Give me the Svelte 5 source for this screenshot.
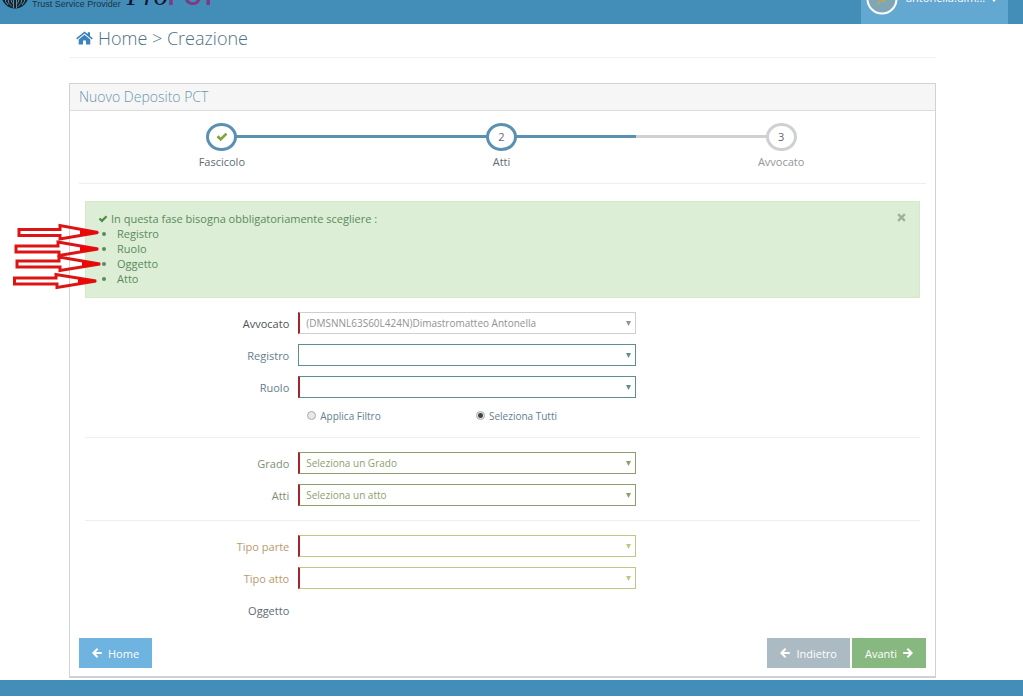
<script>
  const points = ['Registro', 'Ruolo', 'Oggetto', 'Atto'];
  const groups = [
    {
      rows: [
        { id: 'avvocato', label: 'Avvocato', value: '(DMSNNL63S60L424N)Dimastromatteo Antonella', tone: 'muted', required: true },
        { id: 'registro', label: 'Registro', value: '', tone: 'teal', required: false },
        { id: 'ruolo', label: 'Ruolo', value: '', tone: 'teal', required: true }
      ],
      filter: true
    },
    {
      rows: [
        { id: 'grado', label: 'Grado', value: 'Seleziona un Grado', tone: 'green', required: true },
        { id: 'atti', label: 'Atti', value: 'Seleziona un atto', tone: 'green', required: true }
      ]
    },
    {
      rows: [
        { id: 'tipo-parte', label: 'Tipo parte', value: '', tone: 'lime', required: true },
        { id: 'tipo-atto', label: 'Tipo atto', value: '', tone: 'lime', required: true }
      ],
      last: true
    }
  ];
  const progress = 74;
  let scope = $state('tutti');
  let alertOpen = $state(true);
</script>

{#snippet check(cls)}
  <svg class={cls} viewBox="0 0 12 10" aria-hidden="true"><path d="M0.6 5.2 2.5 3.3 4.7 5.4 9.5 0.7 11.4 2.6 4.7 9.3Z" /></svg>
{/snippet}

{#snippet arrow(flip)}
  <svg class="arrow" class:flip viewBox="0 0 10 10" aria-hidden="true">
    <path d="M9.8 5H1.6M5.6 0.8 1.4 5 5.6 9.2" fill="none" stroke="currentColor" stroke-width="2" />
  </svg>
{/snippet}

<header>
  <div class="brand">
    <svg class="globe" viewBox="0 0 28 28" aria-hidden="true">
      <circle cx="14" cy="14" r="13.5" fill="#10232f" />
      <g fill="none" stroke="#668ca3" stroke-width="1">
        <path d="M12.500 1V27M15.500 1V27M10 12v6q0 4 2.500 5M18 12v6q0 4-2.500 5M7 12v6q0 5 4 7.500M21 12v6q0 5-4 7.500M4 12v5q0 4 3 7M24 12v5q0 4-3 7" />
      </g>
    </svg>
    <span class="tagline">Trust Service Provider</span>
    <span class="product"><i>Pro</i><b>PCT</b></span>
  </div>
  <button class="user">
    <svg class="avatar" viewBox="0 0 32 32" aria-hidden="true">
      <circle cx="16" cy="16" r="14.5" fill="#7fa6b6" stroke="#fff" stroke-width="2" />
      <path d="M10 22 22 13M12 19l8-1" stroke="#b0a868" stroke-width="1.5" />
    </svg>
    <span>antonella.dim...</span>
    <svg class="down" viewBox="0 0 8 5" aria-hidden="true"><path d="M0 0h8L4 5Z" fill="#fff" /></svg>
  </button>
</header>

<main>
  <h1>
    <svg class="house" viewBox="0 0 17 14" aria-hidden="true">
      <path d="M8.5 0.4 0.2 7.3 1.2 8.5 8.5 2.5 15.8 8.5 16.8 7.3 14 5V1.2H11.8V3.1Z" />
      <path d="M8.5 3.7 2.7 8.5V13.6H7V9.5H10V13.6H14.3V8.5Z" />
    </svg>
    <span>Home &gt; Creazione</span>
  </h1>

  <section class="panel">
    <h2>Nuovo Deposito PCT</h2>
    <div class="body">
      <div class="wizard">
        <div class="track"><div class="done" style="width: {progress}%"></div></div>
        <ol>
          <li><span class="ring">{@render check('tick')}</span><span>Fascicolo</span></li>
          <li><span class="ring">2</span><span>Atti</span></li>
          <li class="todo"><span class="ring">3</span><span>Avvocato</span></li>
        </ol>
      </div>

      <div class="content">
        {#if alertOpen}
          <div class="alert">
            <div>
              <p>{@render check('mark')}<span>In questa fase bisogna obbligatoriamente scegliere :</span></p>
              <ul>
                {#each points as point}<li>{point}</li>{/each}
              </ul>
            </div>
            <button class="close" aria-label="Chiudi" onclick={() => (alertOpen = false)}>
              <svg viewBox="0 0 8 8" aria-hidden="true"><path d="M1 1 7 7M7 1 1 7" stroke="currentColor" stroke-width="2" /></svg>
            </button>
            <svg class="pointers" viewBox="0 0 92 70" aria-hidden="true">
              <g fill="none" stroke="#dc1414" stroke-width="3">
                <path d="M7 7.500H48V3.500L86 10.500 48 17V13.500H7Z" />
                <path d="M4 24H46V20L86 27 47 33.500V30H4Z" />
                <path d="M5 39H47V35L88 42 48 48.500V45H5Z" />
                <path d="M2.500 56H44V52.500L84 59 45 65.500V62H2.500Z" />
              </g>
              <path d="M68 7.500 88 10.500 68 13.500ZM68 24 88 27 68 30ZM70 39 90 42 70 45ZM66 56 86 59 66 62Z" fill="#f00505" />
            </svg>
          </div>
        {/if}

        <form>
          {#each groups as group}
            <div class="group">
              {#each group.rows as row}
                <div class="row {row.tone}">
                  <label for={row.id}>{row.label}</label>
                  <div class="field">
                    <select id={row.id} class:required={row.required} disabled={row.tone === 'muted'}>
                      <option>{row.value}</option>
                    </select>
                    <svg viewBox="0 0 5 5" aria-hidden="true"><path d="M0 0h5L2.500 5Z" fill="currentColor" /></svg>
                  </div>
                </div>
              {/each}
              {#if group.filter}
                <div class="row teal choice">
                  <div class="radios">
                    <label><input type="radio" name="scope" value="filtro" bind:group={scope} />Applica Filtro</label>
                    <label><input type="radio" name="scope" value="tutti" bind:group={scope} />Seleziona Tutti</label>
                  </div>
                </div>
              {/if}
              {#if group.last}
                <div class="row slate"><span class="name">Oggetto</span></div>
              {/if}
            </div>
          {/each}
        </form>
      </div>

      <div class="actions">
        <button class="btn home">{@render arrow(false)}Home</button>
        <button class="btn back">{@render arrow(false)}Indietro</button>
        <button class="btn next">Avanti{@render arrow(true)}</button>
      </div>
    </div>
  </section>
</main>
<footer></footer>

<style>
  :global(body) { margin: 0; background: #fff; }
  :global(#app) { font-family: 'Open Sans', sans-serif; font-size: 11px; color: #5f6b75; }
  * { box-sizing: border-box; }
  button, select, input { font: inherit; }
  svg { display: block; flex: none; }

  header { display: flex; justify-content: space-between; align-items: flex-end; height: 24px; padding-right: 15px; overflow: hidden; background: #438eb9; }
  .brand { display: flex; align-items: flex-end; padding-bottom: 14px; }
  .globe { width: 28px; height: 28px; margin: 0 3px 1px 1px; }
  .tagline { font: 9px/12px 'Liberation Sans', sans-serif; color: #1b3446; }
  .product { display: flex; align-items: baseline; margin-left: 6px; padding-bottom: 1px; line-height: 24px; color: #141432; }
  .product i { font: italic 28px/24px 'Liberation Serif', serif; }
  .product b { font: bold 24px/24px 'Liberation Sans', sans-serif; color: #7d3b82; }
  .user { display: flex; align-items: center; height: 45px; flex: none; width: 147px; padding: 0 10px 5px 5px; border: 0; background: #62a8d1; color: #fff; }
  .avatar { width: 32px; height: 32px; margin-right: 8px; }
  .user span { flex: 1; padding-bottom: 4px; text-align: left; white-space: nowrap; }
  .down { width: 8px; height: 5px; }

  main { padding: 0 87px 2px 69px; }
  h1 { display: flex; align-items: center; gap: 5px; height: 34px; margin: 0 0 25px; padding: 0 0 6px 7px; border-bottom: 1px solid #f0f2f4; font-size: 18px; font-weight: 300; color: #4e7186; }
  .house { width: 17px; height: 14px; fill: #3c83bd; }
  .panel { border: 1px solid #d0d2d3; border-bottom-width: 2px; }
  h2 { margin: 0; padding: 0 9px; border-bottom: 1px solid #dcdcdc; background: #f6f6f6; font-size: 14px; line-height: 26px; font-weight: 300; color: #6a96af; }
  .body { padding: 12px 9px 8px; }

  .wizard { display: grid; padding: 0 5px 13px 3px; border-bottom: 1px solid #eceeef; }
  .track, ol { grid-area: 1 / 1; }
  .track { height: 3px; margin: 12px 16.667% 0; background: #cfd0d1; }
  .done { height: 100%; background: #5a91b2; }
  ol { display: grid; grid-template-columns: repeat(3, 1fr); margin: 0; padding: 0; list-style: none; z-index: 1; }
  ol li { display: flex; flex-direction: column; align-items: center; gap: 3px; line-height: 16px; }
  .ring { display: flex; align-items: center; justify-content: center; width: 31px; height: 28px; border: 3px solid #5a91b2; border-radius: 50%; background: #fff; }
  .todo { color: #929699; }
  .todo .ring { border-color: #cfd0d1; color: #666; }
  .tick { width: 12px; height: 10px; fill: #7da636; }

  .content { padding: 17px 6px 0; }
  .alert { position: relative; display: flex; justify-content: space-between; align-items: flex-start; padding: 9px 13px 11px 12px; border: 1px solid #d5e9c8; background: #dceed6; color: #5b8a5c; line-height: 15px; }
  .alert p { display: flex; align-items: center; gap: 3px; margin: 0; }
  .mark { width: 10px; height: 8px; fill: #4e8b46; }
  .alert ul { margin: 0; padding-left: 19px; }
  .close { margin: 2px 0 0; padding: 0; border: 0; background: none; color: #9cb297; }
  .close svg { width: 9px; height: 9px; }
  .pointers { position: absolute; left: -74px; top: 20px; width: 92px; height: 70px; }

  .group { display: grid; gap: 10px; padding: 14px 0; }
  .group + .group { border-top: 1px solid #eceeef; }
  .group:last-child { padding-bottom: 0; }
  .row { display: grid; grid-template-columns: 204fr 337fr 275fr; column-gap: 9px; align-items: center; min-height: 22px; }
  .choice { min-height: 15px; }
  .row > label, .name { text-align: right; }
  .field { display: grid; align-items: center; }
  .field select, .field svg { grid-area: 1 / 1; }
  .field svg { justify-self: end; width: 5px; height: 5px; margin-right: 5px; pointer-events: none; }
  select { appearance: none; width: 100%; height: 22px; padding: 0 16px 0 7px; border: 1px solid currentColor; border-radius: 0; background: #fff; color: inherit; font-size: 10px; opacity: 1; }
  select.required { border-left: 2px solid #a3242c; padding-left: 6px; }
  .muted { color: #4d5357; }
  .muted .field { color: #929292; }
  .muted select { border-color: #cfcfcf #cfcfcf #cfcfcf #a3242c; }
  .teal { color: #647e8e; }
  .teal .field { color: #5c8d91; }
  .green { color: #7e8e78; }
  .green .field { color: #8b9f6c; }
  .lime { color: #b99a6b; }
  .lime .field { color: #bdc982; }
  .radios { grid-column: 2; display: grid; grid-template-columns: 1fr 1fr; font-size: 10px; }
  .radios label { display: flex; align-items: center; gap: 4px; padding-left: 9px; }
  .radios input { appearance: none; width: 9px; height: 9px; margin: 0; border: 1px solid #a8acae; border-radius: 50%; background: #e8e8e8; }
  .radios input:checked { background: radial-gradient(circle, #444 0 2px, #e8e8e8 3px); }

  .actions { display: flex; gap: 2px; margin-top: 17px; }
  .btn { display: flex; align-items: center; justify-content: center; gap: 6px; height: 30px; padding: 0 13px; border: 0; color: #fff; }
  .arrow { width: 10px; height: 10px; }
  .flip { transform: scaleX(-1); }
  .home { margin-right: auto; background: #6fb3e0; }
  .back { background: #abbac3; }
  .next { background: #87b87f; }
  footer { height: 16px; background: #438eb9; }
</style>
